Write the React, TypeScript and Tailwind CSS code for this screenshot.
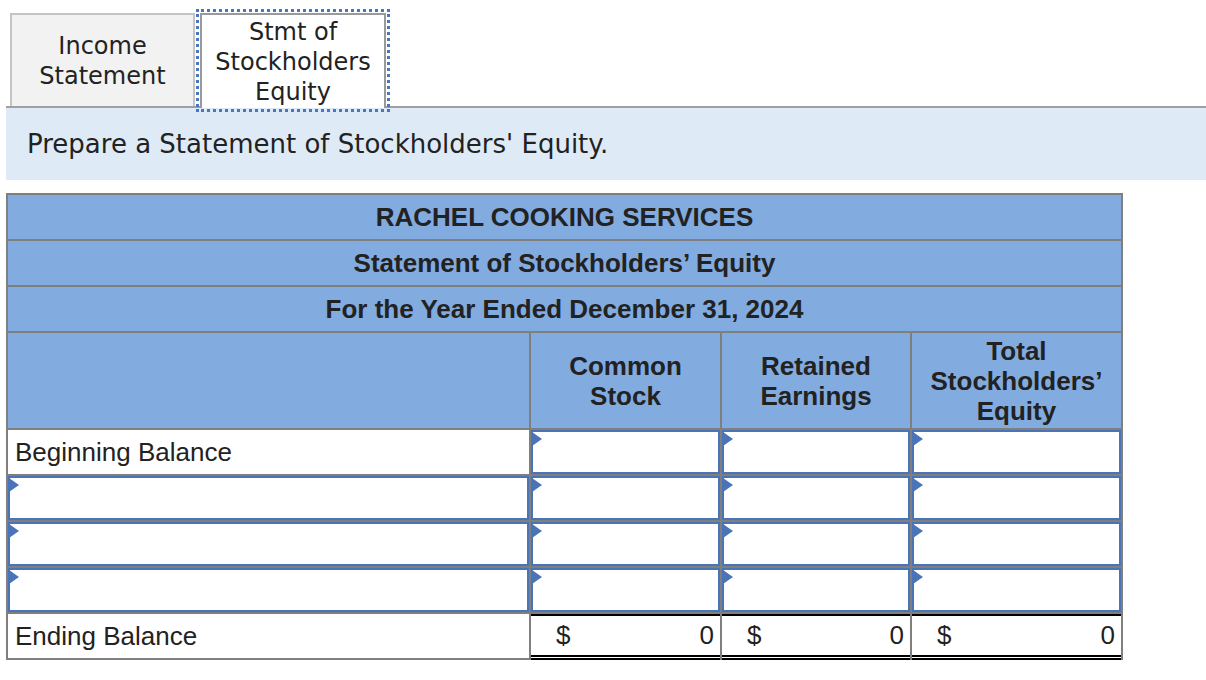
import React from 'react'

const tabFont = { fontFamily: '"DejaVu Sans", Verdana, sans-serif' }

const Marker = () => (
  <span className="absolute left-[1px] top-[2px] h-0 w-0 border-y-[7px] border-l-[10px] border-y-transparent border-l-[#4a74b8]" />
)

const InputCell = () => (
  <div className="relative h-[44px] bg-white">
    <div className="h-full w-full border-2 border-[#4a74b8] bg-white" />
    <Marker />
  </div>
)

const TotalCell = () => (
  <div className="flex h-[46px] items-center justify-between border-t-2 border-b-[5px] border-double border-t-black border-b-black bg-white pl-[25px] pr-[6px] text-[26px] text-[#222]">
    <span>$</span>
    <span>0</span>
  </div>
)

const App = () => {
  return (
    <div className="min-h-[680px] w-[1206px] bg-white" style={{ fontFamily: '"Liberation Sans", Arial, sans-serif' }}>
      <div className="flex items-end gap-[5px] pl-[10px] pt-[13px]" style={tabFont}>
        <div className="flex h-[93px] w-[185px] flex-col items-center justify-center border-2 border-b-0 border-[#c4c4c4] bg-[#f2f2f2] text-[24px] leading-[30px] text-[#222]">
          <span>Income</span>
          <span>Statement</span>
        </div>
        <div className="relative z-10 -mb-[2px] flex h-[95px] w-[186px] flex-col items-center justify-center border-2 border-b-0 border-[#9a9a9a] bg-white text-[24px] leading-[30px] text-[#222] outline-[3px] outline-offset-1 outline-dotted outline-[#4a76c0]">
          <span>Stmt of</span>
          <span>Stockholders</span>
          <span>Equity</span>
        </div>
      </div>

      <div className="ml-[6px] flex h-[74px] items-center border-t-2 border-[#a0a0a0] bg-[#deebf7] pl-[21px] text-[26px] text-[#222]" style={tabFont}>
        Prepare a Statement of Stockholders' Equity.
      </div>

      <div className="ml-[6px] mt-[13px] grid w-[1117px] grid-cols-[521px_189px_188px_209px] gap-[2px] bg-[#7f7f7f] px-[2px] pt-[2px]">
        <div className="col-span-4 flex h-[44px] items-center justify-center bg-[#82abdf] text-[26px] font-bold text-[#222]">
          RACHEL COOKING SERVICES
        </div>
        <div className="col-span-4 flex h-[44px] items-center justify-center bg-[#82abdf] text-[26px] font-bold text-[#222]">
          Statement of Stockholders’ Equity
        </div>
        <div className="col-span-4 flex h-[44px] items-center justify-center bg-[#82abdf] text-[26px] font-bold text-[#222]">
          For the Year Ended December 31, 2024
        </div>

        <div className="h-[95px] bg-[#82abdf]" />
        <div className="flex h-[95px] flex-col items-center justify-center bg-[#82abdf] text-[26px] font-bold leading-[30px] text-[#222]">
          <span>Common</span>
          <span>Stock</span>
        </div>
        <div className="flex h-[95px] flex-col items-center justify-center bg-[#82abdf] text-[26px] font-bold leading-[30px] text-[#222]">
          <span>Retained</span>
          <span>Earnings</span>
        </div>
        <div className="flex h-[95px] flex-col items-center justify-center bg-[#82abdf] text-[26px] font-bold leading-[30px] text-[#222]">
          <span>Total</span>
          <span>Stockholders’</span>
          <span>Equity</span>
        </div>

        <div className="flex h-[44px] items-center bg-white pl-[7px] text-[26px] text-[#222]">Beginning Balance</div>
        <InputCell />
        <InputCell />
        <InputCell />

        {[0, 1, 2].map((i) => (
          <React.Fragment key={i}>
            <InputCell />
            <InputCell />
            <InputCell />
            <InputCell />
          </React.Fragment>
        ))}

        <div className="flex h-[46px] items-center border-b-2 border-[#7f7f7f] bg-white pl-[7px] text-[26px] text-[#222]">Ending Balance</div>
        <TotalCell />
        <TotalCell />
        <TotalCell />
      </div>
    </div>
  )
}

export default App
